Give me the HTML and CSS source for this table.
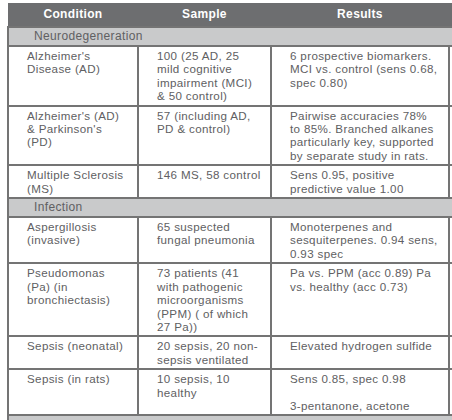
FILE: index.html
```html
<!DOCTYPE html>
<html lang="en">
<head>
  <meta charset="UTF-8">
  <title>Breath biomarkers</title>
  <link rel="stylesheet" href="styles.css">
</head>
<body>
  <div class="frame">
    <table class="studies">
      <colgroup>
        <col class="col-condition">
        <col class="col-sample">
        <col class="col-results">
        <col class="col-ref">
      </colgroup>
      <thead>
        <tr>
          <th>Condition</th>
          <th>Sample</th>
          <th>Results</th>
          <th></th>
        </tr>
      </thead>
      <tbody>
        <tr class="group"><td colspan="4">Neurodegeneration</td></tr>
        <tr>
          <td>Alzheimer's<br>Disease (AD)</td>
          <td>100 (25 AD, 25<br>mild cognitive<br>impairment (MCI)<br>&amp; 50 control)</td>
          <td>6 prospective biomarkers.<br>MCI vs. control (sens 0.68,<br>spec 0.80)</td>
          <td></td>
        </tr>
        <tr>
          <td>Alzheimer's (AD)<br>&amp; Parkinson's<br>(PD)</td>
          <td>57 (including AD,<br>PD &amp; control)</td>
          <td>Pairwise accuracies 78%<br>to 85%. Branched alkanes<br>particularly key, supported<br>by separate study in rats.</td>
          <td></td>
        </tr>
        <tr>
          <td>Multiple Sclerosis<br>(MS)</td>
          <td>146 MS, 58 control</td>
          <td>Sens 0.95, positive<br>predictive value 1.00</td>
          <td></td>
        </tr>
        <tr class="group"><td colspan="4">Infection</td></tr>
        <tr>
          <td>Aspergillosis<br>(invasive)</td>
          <td>65 suspected<br>fungal pneumonia</td>
          <td>Monoterpenes and<br>sesquiterpenes. 0.94 sens,<br>0.93 spec</td>
          <td></td>
        </tr>
        <tr>
          <td>Pseudomonas<br>(Pa) (in<br>bronchiectasis)</td>
          <td>73 patients (41<br>with pathogenic<br>microorganisms<br>(PPM) ( of which<br>27 Pa))</td>
          <td>Pa vs. PPM (acc 0.89) Pa<br>vs. healthy (acc 0.73)</td>
          <td></td>
        </tr>
        <tr>
          <td>Sepsis (neonatal)</td>
          <td>20 sepsis, 20 non-<br>sepsis ventilated</td>
          <td>Elevated hydrogen sulfide</td>
          <td></td>
        </tr>
        <tr>
          <td>Sepsis (in rats)</td>
          <td>10 sepsis, 10<br>healthy</td>
          <td>Sens 0.85, spec 0.98<br><br>3-pentanone, acetone</td>
          <td></td>
        </tr>
        <tr class="group"><td colspan="4">&nbsp;</td></tr>
      </tbody>
    </table>
  </div>
</body>
</html>
```

FILE: styles.css
```css
body {
  margin: 0;
  background: #ffffff;
  font-family: "Liberation Sans", Arial, sans-serif;
}

.frame {
  width: 452px;
  height: 420px;
  overflow: hidden;
  padding: 3px 0 0 7px;
  box-sizing: border-box;
}

.studies {
  border-collapse: collapse;
  table-layout: fixed;
  width: 600px;
  font-size: 11.6px;
  line-height: 13.4px;
  letter-spacing: 0.35px;
  color: #606062;
}

.col-condition { width: 130px; }
.col-sample { width: 133px; }
.col-results { width: 178px; }
.col-ref { width: 159px; }

.studies th {
  background: #6d6e70;
  color: #ffffff;
  font-weight: bold;
  font-size: 12px;
  height: 23px;
  padding: 0;
  text-align: center;
  border: none;
}

.studies td {
  vertical-align: top;
  padding: 2px 6px 2px 18px;
  border: 2px solid #747474;
  white-space: nowrap;
}

.studies .group td {
  background: #c9cacb;
  padding: 1px 10px 1px 25px;
  font-size: 12px;
  line-height: 15px;
}
```
